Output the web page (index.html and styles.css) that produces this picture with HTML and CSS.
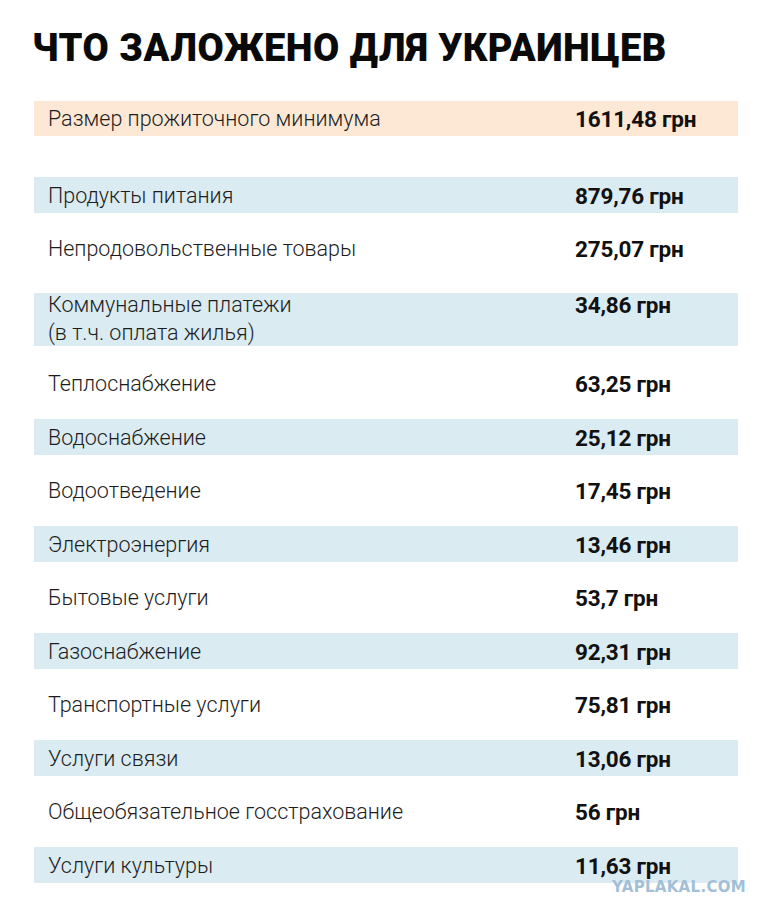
FILE: index.html
```html
<!DOCTYPE html>
<html lang="ru">
<head>
<meta charset="utf-8">
<title>Что заложено для украинцев</title>
<link rel="stylesheet" href="styles.css">
</head>
<body>
<main class="page">
  <h1 class="title">ЧТО ЗАЛОЖЕНО ДЛЯ УКРАИНЦЕВ</h1>
  <div class="row row-total">
    <span class="label">Размер прожиточного минимума</span>
    <span class="value">1611,48 грн</span>
  </div>
  <div class="list">
    <div class="row alt"><span class="label">Продукты питания</span><span class="value">879,76 грн</span></div>
    <div class="row"><span class="label">Непродовольственные товары</span><span class="value">275,07 грн</span></div>
    <div class="row alt row-tall"><span class="label">Коммунальные платежи<br>(в т.ч. оплата жилья)</span><span class="value">34,86 грн</span></div>
    <div class="row"><span class="label">Теплоснабжение</span><span class="value">63,25 грн</span></div>
    <div class="row alt"><span class="label">Водоснабжение</span><span class="value">25,12 грн</span></div>
    <div class="row"><span class="label">Водоотведение</span><span class="value">17,45 грн</span></div>
    <div class="row alt"><span class="label">Электроэнергия</span><span class="value">13,46 грн</span></div>
    <div class="row"><span class="label">Бытовые услуги</span><span class="value">53,7 грн</span></div>
    <div class="row alt"><span class="label">Газоснабжение</span><span class="value">92,31 грн</span></div>
    <div class="row"><span class="label">Транспортные услуги</span><span class="value">75,81 грн</span></div>
    <div class="row alt"><span class="label">Услуги связи</span><span class="value">13,06 грн</span></div>
    <div class="row"><span class="label">Общеобязательное госстрахование</span><span class="value">56 грн</span></div>
    <div class="row alt"><span class="label">Услуги культуры</span><span class="value">11,63 грн</span></div>
  </div>
  <div class="watermark">YAPLAKAL.COM</div>
</main>
</body>
</html>
```

FILE: styles.css
```css
html, body {
  margin: 0;
  padding: 0;
  background: #ffffff;
}

.page {
  position: relative;
  width: 773px;
  height: 916px;
  padding-top: 26px;
  box-sizing: border-box;
  font-family: Roboto, "Liberation Sans", sans-serif;
  color: #1d1d1d;
  overflow: hidden;
}

.title {
  margin: 0 0 31px 32px;
  font-family: Roboto, "Liberation Sans", sans-serif;
  font-weight: 900;
  font-size: 38px;
  line-height: 44px;
  letter-spacing: 0.5px;
  color: #0a0a0a;
  white-space: nowrap;
}

.row {
  display: grid;
  grid-template-columns: 527px 1fr;
  align-items: center;
  width: 704px;
  height: 36px;
  margin-left: 34px;
  padding: 1px 0 0 14px;
  box-sizing: border-box;
}

.row-total {
  height: 35px;
  background: #fce8d5;
}

.list {
  display: flex;
  flex-direction: column;
  gap: 17.5px;
  margin-top: 41px;
}

.alt {
  background: #daebf1;
}

.row-tall {
  height: 53px;
  margin-top: 9px;
  margin-bottom: 2px;
  align-items: start;
  padding-top: 0;
}

.row-tall .label,
.row-tall .value {
  line-height: 28px;
  margin-top: -2px;
}

.label {
  font-weight: 300;
  font-size: 21.5px;
  line-height: 24px;
  color: #1d1d1d;
  white-space: nowrap;
}

.value {
  font-weight: 700;
  font-size: 22.5px;
  line-height: 24px;
  letter-spacing: -0.2px;
  color: #111111;
  white-space: nowrap;
}

.watermark {
  position: absolute;
  left: 612px;
  top: 878px;
  font-family: "DejaVu Sans", sans-serif;
  font-weight: 700;
  font-size: 15px;
  line-height: 18px;
  letter-spacing: 0.3px;
  color: #a3bfd6;
}
```
